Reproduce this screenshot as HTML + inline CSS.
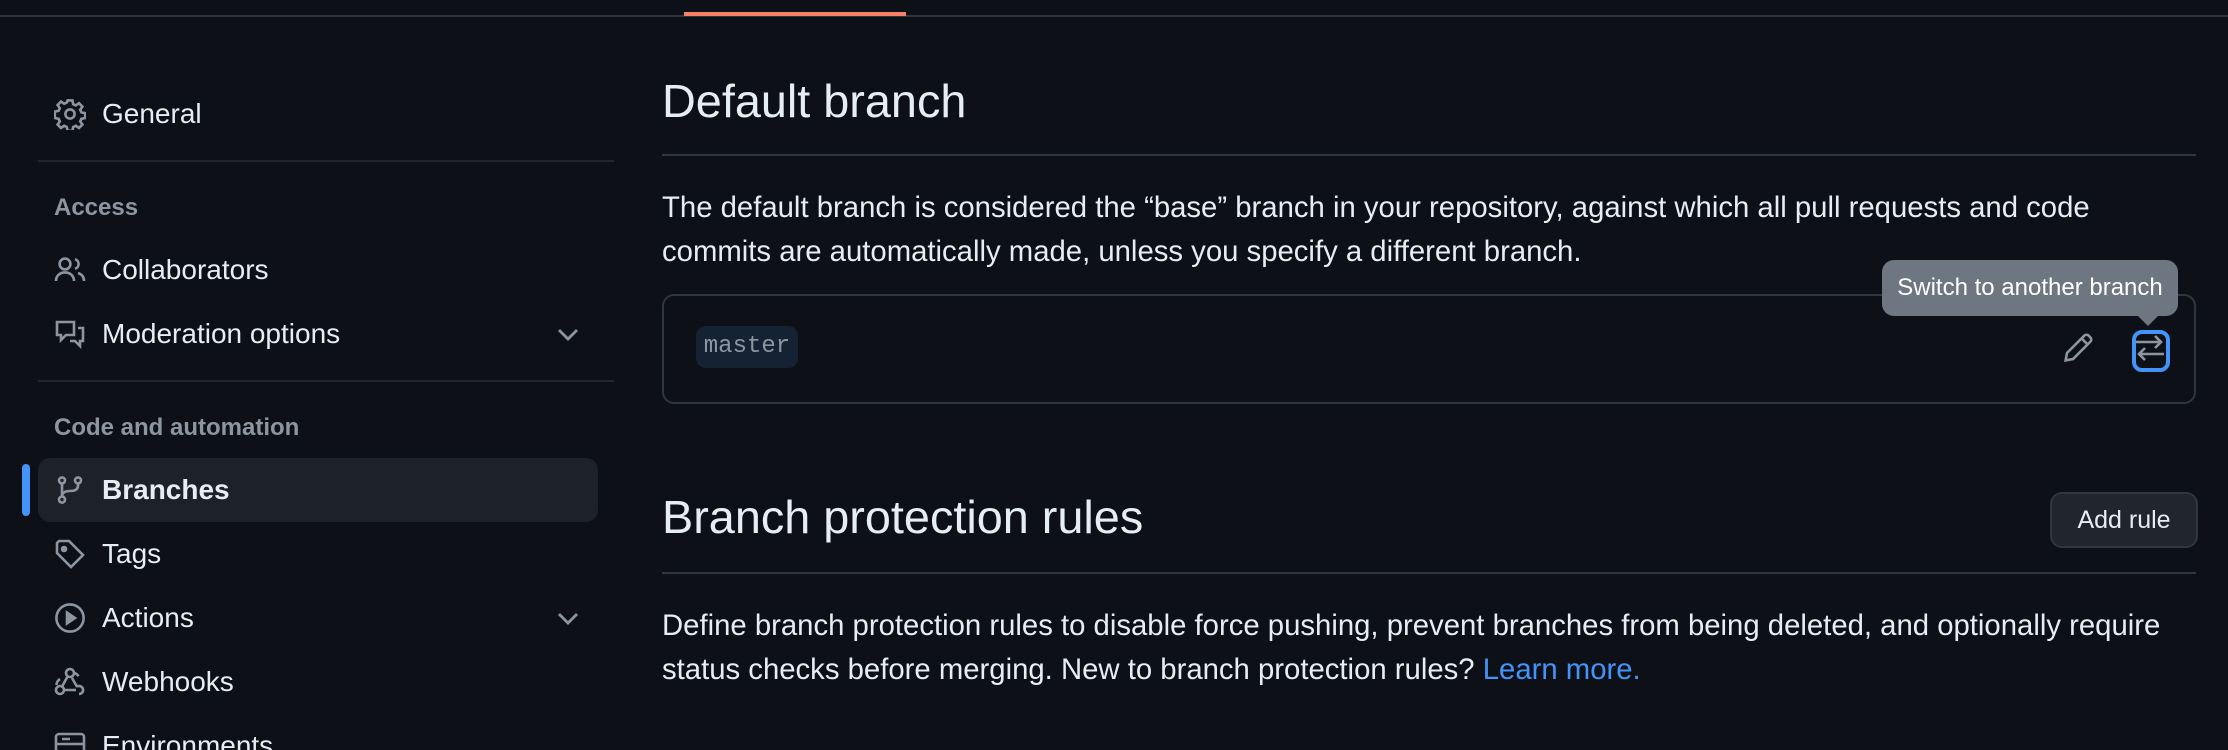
<!DOCTYPE html>
<html><head><meta charset="utf-8"><style>
html{height:750px;overflow:hidden;}
html,body{margin:0;padding:0;background:#0d1117;}
body{zoom:2;width:1114px;height:375px;overflow:hidden;position:relative;font-family:"Liberation Sans",sans-serif;color:#e6edf3;}
.abs{position:absolute;}
.topline{left:0;top:7.5px;width:1114px;height:1px;background:#30363d;}
.tab{left:342px;top:6px;width:111px;height:2px;background:#f78166;}
.item{position:absolute;left:27px;height:32px;line-height:32px;font-size:14px;color:#e6edf3;}
.item svg{position:absolute;left:0;top:8px;}
.item span{position:absolute;left:24px;white-space:nowrap;}
.sep{position:absolute;left:19px;width:288px;height:1px;background:#21262d;}
.hdr{position:absolute;left:27px;font-size:12px;font-weight:bold;color:#8d96a0;}
.chev{position:absolute;left:276px;}
h2{position:absolute;margin:0;font-weight:400;font-size:23.4px;left:331px;color:#e6edf3;}
.rule{position:absolute;left:331px;width:767px;height:1px;background:#30363d;}
p{position:absolute;margin:0;left:331px;width:767px;font-size:14.65px;line-height:22px;color:#e6edf3;}
</style></head><body>
<div class="abs topline"></div>
<div class="abs tab"></div>

<div class="item" style="top:41px"><svg width="16" height="16" viewBox="0 0 16 16" fill="none" stroke="#8d96a0" stroke-width="1.3"><path d="M6.8 1.2h2.4l.4 1.9 1.3.6 1.6-1.1 1.7 1.7-1.1 1.6.6 1.3 1.9.4v2.4l-1.9.4-.6 1.3 1.1 1.6-1.7 1.7-1.6-1.1-1.3.6-.4 1.9H6.8l-.4-1.9-1.3-.6-1.6 1.1-1.7-1.7 1.1-1.6-.6-1.3-1.9-.4V6.8l1.9-.4.6-1.3-1.1-1.6 1.7-1.7 1.6 1.1 1.3-.6z"/><circle cx="8" cy="8" r="2.3"/></svg><span>General</span></div>
<div class="sep" style="top:80px"></div>
<div class="hdr" style="top:97px">Access</div>
<div class="item" style="top:119px"><svg width="16" height="16" viewBox="0 0 16 16" fill="none" stroke="#8d96a0" stroke-width="1.3"><circle cx="5.5" cy="5" r="2.7"/><path d="M1 13.5c0-2.7 2-4.3 4.5-4.3s4.5 1.6 4.5 4.3M10.5 2.6a2.5 2.5 0 0 1 0 4.8M12 9.5c1.8.6 3 2 3 4"/></svg><span>Collaborators</span></div>
<div class="item" style="top:151px"><svg width="16" height="16" viewBox="0 0 16 16" fill="none" stroke="#8d96a0" stroke-width="1.3"><path d="M1.5 2h8.5v6.5H6L3.5 11V8.5h-2zM12 5h2.5v6.5h-1.5V14L10.5 11.5H8"/></svg><span>Moderation options</span>
<svg class="chev" style="left:249px" width="16" height="16" viewBox="0 0 16 16" fill="none" stroke="#8d96a0" stroke-width="1.4"><path d="M3.5 6l4.5 4.5L12.5 6"/></svg></div>
<div class="sep" style="top:190px"></div>
<div class="hdr" style="top:207px">Code and automation</div>
<div class="abs" style="left:19px;top:229px;width:280px;height:32px;border-radius:6px;background:#1d2128"></div>
<div class="abs" style="left:11px;top:232px;width:4px;height:26px;border-radius:3px;background:#4493f8"></div>
<div class="item" style="top:229px;font-weight:bold"><svg width="16" height="16" viewBox="0 0 16 16" fill="none" stroke="#8d96a0" stroke-width="1.3"><circle cx="4" cy="3.2" r="1.5"/><circle cx="4" cy="12.8" r="1.5"/><circle cx="12" cy="3.2" r="1.5"/><path d="M4 4.7v6.6M12 4.7v1c0 2-1.5 2.8-4 2.8S4 9.5 4 11"/></svg><span>Branches</span></div>
<div class="item" style="top:261px"><svg width="16" height="16" viewBox="0 0 16 16" fill="none" stroke="#8d96a0" stroke-width="1.3"><path d="M1.5 2.5v5l7 7 6-6-7-7h-5z"/><circle cx="5" cy="5.5" r="1" fill="#8d96a0"/></svg><span>Tags</span></div>
<div class="item" style="top:293px"><svg width="16" height="16" viewBox="0 0 16 16" fill="none" stroke="#8d96a0" stroke-width="1.3"><circle cx="8" cy="8" r="6.8"/><path d="M6.5 5.3v5.4L10.5 8z" fill="#8d96a0"/></svg><span>Actions</span>
<svg class="chev" style="left:249px" width="16" height="16" viewBox="0 0 16 16" fill="none" stroke="#8d96a0" stroke-width="1.4"><path d="M3.5 6l4.5 4.5L12.5 6"/></svg></div>
<div class="item" style="top:325px"><svg width="16" height="16" viewBox="0 0 16 16" fill="none" stroke="#8d96a0" stroke-width="1.3"><circle cx="8" cy="3.5" r="2"/><circle cx="3" cy="12" r="2"/><path d="M6.8 5.2 4 10.3M10 3.5c1 .2 1.8.8 2.2 1.7M9 6l2.6 4.5M5 12h6M12.5 14a2 2 0 1 0-1-3.7M1.2 9.5A4 4 0 0 1 3 6.5"/></svg><span>Webhooks</span></div>
<div class="item" style="top:357px"><svg width="16" height="16" viewBox="0 0 16 16" fill="none" stroke="#8d96a0" stroke-width="1.3"><rect x="1" y="2" width="14" height="12" rx="1.5"/><path d="M1 7h14M4 4.5h4"/></svg><span>Environments</span></div>

<h2 style="top:37px">Default branch</h2>
<div class="rule" style="top:77px"></div>
<p style="top:93px">The default branch is considered the “base” branch in your repository, against which all pull requests and code commits are automatically made, unless you specify a different branch.</p>
<div class="abs" style="left:331px;top:147px;width:765px;height:53px;border:1px solid #30363d;border-radius:6px"></div>
<div class="abs" style="left:348px;top:163px;width:51px;height:21px;border-radius:5px;background:#152234;color:#8d96a0;font-family:'Liberation Mono',monospace;font-size:12px;line-height:21px;text-align:center">master</div>
<svg class="abs" style="left:1031px;top:166px" width="16" height="16" viewBox="0 0 16 16" fill="none" stroke="#8d96a0" stroke-width="1.3"><path d="M11.2 1.8a1.5 1.5 0 0 1 2.1 0l.9.9a1.5 1.5 0 0 1 0 2.1L5.5 13.5 1.8 14.2l.7-3.7z"/><path d="M9.8 3.2l3 3"/></svg>
<div class="abs" style="left:1066px;top:165px;width:15px;height:17px;border:2px solid #4493f8;border-radius:5px"></div>
<svg class="abs" style="left:1067px;top:166px" width="16" height="16" viewBox="0 0 16 16" fill="none" stroke="#8d96a0" stroke-width="1.3"><path d="M1 5h12.5M10.5 2l3 3-3 3M15 11H2.5M5.5 8l-3 3 3 3"/></svg>
<div class="abs" style="left:941px;top:130px;width:148px;height:28px;border-radius:6px;background:#6e7681;color:#fff;font-size:12px;line-height:28px;text-align:center">Switch to another branch</div>
<div class="abs" style="left:1069px;top:158px;width:0;height:0;border-left:5px solid transparent;border-right:5px solid transparent;border-top:5px solid #6e7681"></div>

<h2 style="top:245px">Branch protection rules</h2>
<div class="abs" style="left:1025px;top:246px;width:72px;height:26px;border:1px solid #30363d;border-radius:6px;background:#21262d;font-size:12.5px;line-height:26px;text-align:center;color:#e6edf3">Add rule</div>
<div class="rule" style="top:286px"></div>
<p style="top:302px">Define branch protection rules to disable force pushing, prevent branches from being deleted, and optionally require status checks before merging. New to branch protection rules? <span style="color:#4493f8">Learn more.</span></p>
</body></html>
